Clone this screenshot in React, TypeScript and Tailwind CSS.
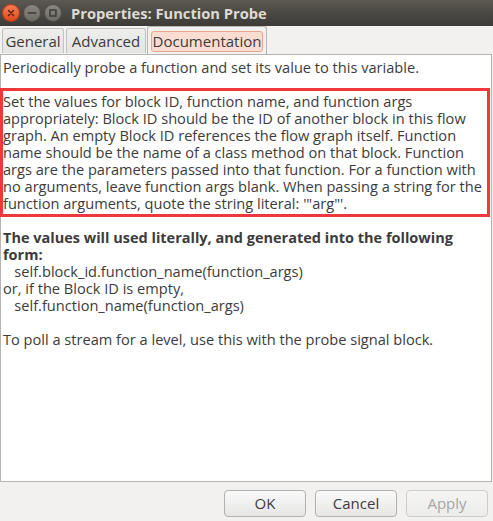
import React from "react";

const font = { fontFamily: '"Open Sans", "Noto Sans", sans-serif' };

function TitleBar() {
  return (
    <div className="h-[26px] flex items-center bg-gradient-to-b from-[#5c5851] to-[#3c3b37] shrink-0">
      <div className="flex items-center ml-[2px] gap-[3px]">
        <div className="w-[18px] h-[18px] rounded-full bg-gradient-to-b from-[#f47d55] to-[#de4814] border border-[#b83a10] flex items-center justify-center">
          <svg width="8" height="8" viewBox="0 0 8 8">
            <path d="M1.5 1.5 L6.5 6.5 M6.5 1.5 L1.5 6.5" stroke="#5a1c08" strokeWidth="1.4" strokeLinecap="round" />
          </svg>
        </div>
        <div className="w-[18px] h-[18px] rounded-full bg-gradient-to-b from-[#8a8780] to-[#6e6b65] border border-[#4f4d48] flex items-center justify-center">
          <svg width="10" height="10" viewBox="0 0 10 10">
            <path d="M1.5 5 L8.5 5" stroke="#3a3935" strokeWidth="1.6" strokeLinecap="round" />
          </svg>
        </div>
        <div className="w-[18px] h-[18px] rounded-full bg-gradient-to-b from-[#8a8780] to-[#6e6b65] border border-[#4f4d48] flex items-center justify-center">
          <svg width="10" height="10" viewBox="0 0 10 10">
            <rect x="2" y="2" width="6" height="6" fill="none" stroke="#3a3935" strokeWidth="1.4" />
          </svg>
        </div>
      </div>
      <div className="ml-[9px] text-[14.7px] font-bold text-[#dfdbd2] leading-none">
        Properties: Function Probe
      </div>
    </div>
  );
}

function Tabs() {
  return (
    <div className="h-[28px] flex items-end pl-[2px] shrink-0 relative z-10">
      <div className="w-[62px] h-[25px] rounded-t-[3px] border border-b-0 border-[#c3c1bd] bg-gradient-to-b from-[#eeeeed] to-[#e4e4e3] flex items-center justify-center text-[15px] text-[#3c3c3c] mb-[1px]">
        General
      </div>
      <div className="ml-[2px] w-[80px] h-[25px] rounded-t-[3px] border border-b-0 border-[#c3c1bd] bg-gradient-to-b from-[#eeeeed] to-[#e4e4e3] flex items-center justify-center text-[15px] text-[#3c3c3c] mb-[1px]">
        Advanced
      </div>
      <div className="ml-[1px] w-[120px] h-[28px] rounded-t-[3px] border border-b-0 border-[#b9b7b3] bg-[#f2f1f0] flex items-start justify-center pt-[4px]">
        <div className="w-[112px] h-[21px] rounded-[3px] border border-[#e9a58b] bg-[#f9ddd2] flex items-center justify-center text-[15px] text-[#3c3c3c]">
          Documentation
        </div>
      </div>
    </div>
  );
}

const lines1 = [
  "Set the values for block ID, function name, and function args",
  "appropriately: Block ID should be the ID of another block in this flow",
  "graph. An empty Block ID references the flow graph itself. Function",
  "name should be the name of a class method on that block. Function",
  "args are the parameters passed into that function. For a function with",
  "no arguments, leave function args blank. When passing a string for the",
  "function arguments, quote the string literal: '\"arg\"'.",
];

function Panel() {
  return (
    <div className="relative flex-1 bg-white border border-[#b6b4b0] mr-[1px] pt-[4px] pl-[2px] text-[14.6px] leading-[17px] text-[#3c3c3c] whitespace-pre">
      <div>Periodically probe a function and set its value to this variable.</div>
      <div>&nbsp;</div>
      {lines1.map((l) => (
        <div key={l}>{l}</div>
      ))}
      <div>&nbsp;</div>
      <div className="font-bold text-[14.5px]">The values will used literally, and generated into the following</div>
      <div className="font-bold text-[14.5px]">form:</div>
      <div>{"   self.block_id.function_name(function_args)"}</div>
      <div>or, if the Block ID is empty,</div>
      <div>{"   self.function_name(function_args)"}</div>
      <div>&nbsp;</div>
      <div>To poll a stream for a level, use this with the probe signal block.</div>
      <div className="absolute left-[-1px] top-[33px] w-[490px] h-[129px] border-[3px] border-[#ee383c] pointer-events-none" />
    </div>
  );
}

function Btn({ label, disabled }: { label: string; disabled?: boolean }) {
  return (
    <div
      className={
        "w-[82px] h-[27px] rounded-[4px] border flex items-center justify-center text-[15px] bg-gradient-to-b " +
        (disabled
          ? "border-[#cfcdca] from-[#f5f5f4] to-[#ececeb] text-[#a7a6a3]"
          : "border-[#b3b1ad] from-[#fafafa] to-[#e7e6e5] text-[#3c3c3c]")
      }
    >
      {label}
    </div>
  );
}

export default function App() {
  return (
    <div className="w-[493px] h-[521px] bg-[#f2f1f0] flex flex-col overflow-hidden" style={font}>
      <TitleBar />
      <Tabs />
      <Panel />
      <div className="h-[39px] shrink-0 flex justify-end items-start pt-[8px] pr-[5px] gap-[9px]">
        <Btn label="OK" />
        <Btn label="Cancel" />
        <Btn label="Apply" disabled />
      </div>
    </div>
  );
}
